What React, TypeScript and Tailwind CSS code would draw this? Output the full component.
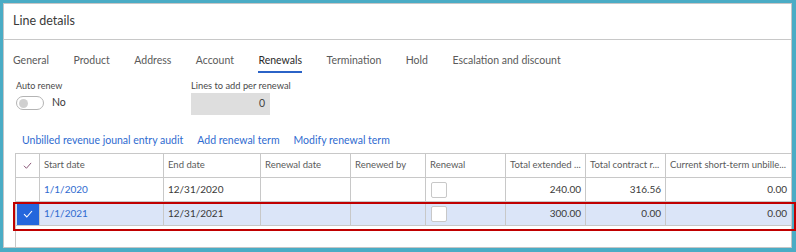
import React from "react";

const font = { fontFamily: "Lato, 'Noto Sans', sans-serif" };

function Check({ color, size = 10 }: { color: string; size?: number }) {
  return (
    <svg width={size} height={size * 0.8} viewBox="0 0 10 8" fill="none">
      <path d="M1 4.2 L3.8 7 L9 1" stroke={color} strokeWidth="1.1" />
    </svg>
  );
}

const cols = "grid-cols-[24px_124px_97px_90px_75px_80px_80px_80px_126px]";

function HeaderCell({ children }: { children?: React.ReactNode }) {
  return (
    <div className="h-[24px] border-r border-b border-[#c8c8c8] pl-[4px] flex items-center text-[9.5px] text-[#5a5a5a] whitespace-nowrap overflow-hidden">
      {children}
    </div>
  );
}

function Cell({
  children,
  right,
  className = "",
}: {
  children?: React.ReactNode;
  right?: boolean;
  className?: string;
}) {
  return (
    <div
      className={`h-[24px] border-r border-b border-[#c8c8c8] flex items-center text-[10px] whitespace-nowrap overflow-hidden ${
        right ? "justify-end pr-[4px]" : "pl-[4px]"
      } ${className}`}
    >
      {children}
    </div>
  );
}

function Box() {
  return <div className="ml-[1px] w-[16px] h-[16px] bg-white border border-[#c8c8c8] rounded-[2px]" />;
}

export default function App() {
  const tabs = ["General", "Product", "Address", "Account", "Renewals", "Termination", "Hold", "Escalation and discount"];
  return (
    <div className="relative w-[796px] h-[252px] bg-[#4aacc5] pt-[3px] pl-[3px] pr-[4px] pb-[4px]" style={font}>
      <div className="w-full h-full bg-white border border-[#c6c6c6] flex flex-col">
        <div className="h-[36px] border-b border-[#c8c8c8] flex items-center pl-[9px] shrink-0">
          <span className="text-[12.5px] text-[#3a3a3a]">Line details</span>
        </div>
        <div className="flex gap-[24.5px] pl-[9px] pt-[12px] shrink-0">
          {tabs.map((t) => (
            <div
              key={t}
              className={`text-[10.5px] leading-[16px] pb-[3px] border-b-2 ${
                t === "Renewals" ? "border-[#2b63c7] text-[#2a2a2a]" : "border-transparent text-[#5a5a5a]"
              }`}
            >
              {t}
            </div>
          ))}
        </div>
        <div className="flex pl-[12px] pt-[6px] shrink-0">
          <div className="w-[175px]">
            <div className="text-[9px] leading-[14px] text-[#4a4a4a]">Auto renew</div>
            <div className="flex items-center mt-[2px] h-[16px]">
              <div className="w-[28px] h-[14px] rounded-full border border-[#b4b4b4] flex items-center pl-[2px]">
                <div className="w-[9px] h-[9px] rounded-full bg-[#d0d0d0]" />
              </div>
              <span className="ml-[8px] text-[10.5px] text-[#3a3a3a]">No</span>
            </div>
          </div>
          <div>
            <div className="text-[9.3px] leading-[14px] text-[#4a4a4a]">Lines to add per renewal</div>
            <div className="w-[79px] h-[22px] bg-[#dedede] flex items-center justify-end pr-[5px] text-[10.5px] text-[#444]">
              0
            </div>
          </div>
        </div>
        <div className="flex gap-[14px] pl-[18px] pt-[17px] text-[10.5px] leading-[16px] text-[#2f6bd0] shrink-0">
          <span>Unbilled revenue jounal entry audit</span>
          <span>Add renewal term</span>
          <span>Modify renewal term</span>
        </div>
        <div className="ml-[11px] mt-[5px] flex-1 border-l border-t border-[#c8c8c8] w-[777px]">
          <div className={`grid ${cols}`}>
            <div className="h-[24px] border-r border-b border-[#c8c8c8] flex items-center justify-center">
              <Check color="#8a5676" size={9} />
            </div>
            <HeaderCell>Start date</HeaderCell>
            <HeaderCell>End date</HeaderCell>
            <HeaderCell>Renewal date</HeaderCell>
            <HeaderCell>Renewed by</HeaderCell>
            <HeaderCell>Renewal</HeaderCell>
            <HeaderCell>Total extended ...</HeaderCell>
            <HeaderCell>Total contract r...</HeaderCell>
            <HeaderCell>Current short-term unbille...</HeaderCell>

            <Cell />
            <Cell className="text-[#2f6bd0]">1/1/2020</Cell>
            <Cell className="text-[#3a3a3a]">12/31/2020</Cell>
            <Cell />
            <Cell />
            <Cell><Box /></Cell>
            <Cell right className="text-[#3a3a3a]">240.00</Cell>
            <Cell right className="text-[#3a3a3a]">316.56</Cell>
            <Cell right className="text-[#3a3a3a]">0.00</Cell>

            <div className="h-[24px] border-r border-b border-[#c8c8c8] bg-[#dbe5f8] pt-[1px] pl-[1px]">
              <div className="w-full h-full bg-[#2466dc] flex items-center justify-center">
                <Check color="#ffffff" size={10} />
              </div>
            </div>
            <Cell className="bg-[#dbe5f8] text-[#2f6bd0]">1/1/2021</Cell>
            <Cell className="bg-[#dbe5f8] text-[#3a3a3a]">12/31/2021</Cell>
            <Cell className="bg-[#dbe5f8]" />
            <Cell className="bg-[#dbe5f8]" />
            <Cell className="bg-[#dbe5f8]"><Box /></Cell>
            <Cell right className="bg-[#dbe5f8] text-[#3a3a3a]">300.00</Cell>
            <Cell right className="bg-[#dbe5f8] text-[#3a3a3a]">0.00</Cell>
            <Cell right className="bg-[#dbe5f8] text-[#3a3a3a]">0.00</Cell>
          </div>
        </div>
      </div>
      <div className="absolute left-[13px] top-[202px] w-[783px] h-[29px] border-2 border-[#c00000] pointer-events-none" />
    </div>
  );
}
